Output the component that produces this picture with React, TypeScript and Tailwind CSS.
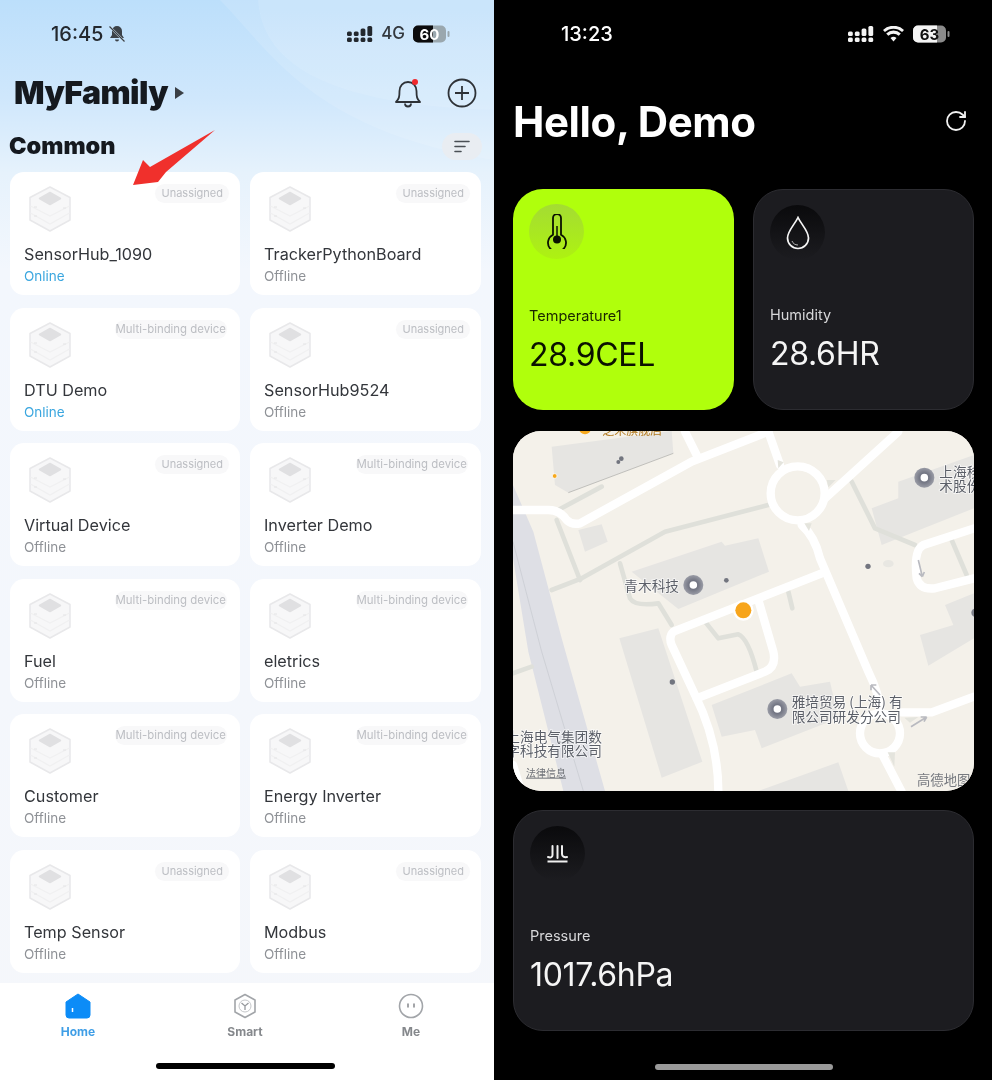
import React from "react";
import { RotateCw } from "lucide-react";

const devices = [
  ["SensorHub_1090", "Unassigned", true], ["TrackerPythonBoard", "Unassigned", false],
  ["DTU Demo", "Multi-binding device", true], ["SensorHub9524", "Unassigned", false],
  ["Virtual Device", "Unassigned", false], ["Inverter Demo", "Multi-binding device", false],
  ["Fuel", "Multi-binding device", false], ["eletrics", "Multi-binding device", false],
  ["Customer", "Multi-binding device", false], ["Energy Inverter", "Multi-binding device", false],
  ["Temp Sensor", "Unassigned", false], ["Modbus", "Unassigned", false],
] as [string, string, boolean][];

function Signal({ color }: { color: string }) {
  return (
    <svg width="26" height="16" viewBox="0 0 26 16" fill={color}>
      <rect x="0" y="5.500" width="4.800" height="4.500" rx="1.500" />
      <rect x="6.800" y="5.500" width="4.800" height="4.500" rx="1.500" />
      <rect x="13.600" y="2.500" width="4.800" height="7.500" rx="1.500" />
      <rect x="20.400" y="0" width="4.800" height="10" rx="1.500" />
      <rect x="0" y="11.500" width="4.800" height="4.500" rx="1.500" />
      <rect x="6.800" y="11.500" width="4.800" height="4.500" rx="1.500" />
      <rect x="13.600" y="11.500" width="4.800" height="4.500" rx="1.500" />
      <rect x="20.400" y="11.500" width="4.800" height="4.500" rx="1.500" />
    </svg>
  );
}

function Battery({ value, dark }: { value: string; dark: boolean }) {
  const fill = dark ? "#f4f4f4" : "#0b0b0d";
  const track = dark ? "#8b8b8b" : "#9aa7ae";
  const text = dark ? "#111" : "#fff";
  return (
    <svg width="37" height="18" viewBox="0 0 37 18">
      <rect x="0" y="0.500" width="33" height="17" rx="5" fill={track} />
      <path d={dark ? "M5 .5h19v17H5a5 5 0 0 1-5-5v-7a5 5 0 0 1 5-5z" : "M5 .5h15v17H5a5 5 0 0 1-5-5v-7a5 5 0 0 1 5-5z"} fill={fill} />
      <rect x="34.500" y="6" width="2" height="6" rx="1" fill={track} />
      <text x="16.500" y="14.500" textAnchor="middle" fontSize="15" fontWeight="700" fontFamily="Inter, sans-serif" fill={text}>{value}</text>
    </svg>
  );
}

function Cube() {
  return (
    <svg width="42" height="46" viewBox="0 0 42 46">
      <path d="M21 1 41 11.500V34L21 45 1 34V11.500Z" fill="#f7f7f8" stroke="#e8e8ea" strokeWidth="1.500" strokeLinejoin="round" />
      <path d="M21 6.500 31.500 12.500 21 18.500 10.500 12.500Z" fill="#e0e0e2" stroke="#e0e0e2" strokeWidth="1.500" strokeLinejoin="round" />
      <path d="M1.500 20 21 30l19.500-10M1.500 27 21 38l19.500-11" fill="none" stroke="#f0f0f1" strokeWidth="1.200" />
      <path d="M5 21h3M34 22h3M5 30h3" stroke="#e4e4e6" strokeWidth="1" />
    </svg>
  );
}

function DeviceCard({ name, tag, online }: { name: string; tag: string; online: boolean }) {
  const multi = tag !== "Unassigned";
  return (
    <div className="h-[123px] rounded-[14px] bg-white pl-[14px] font-['Inter',sans-serif]">
      <div className="flex h-[60px] items-start justify-between">
        <div className="ml-[5px] mt-[14px]"><Cube /></div>
        <div className={`mt-[12px] flex h-[19px] items-center rounded-full bg-[#f8f8f9] text-[#bcbec3] ${multi ? "mr-[13px] px-[1px] text-[11.400px]" : "mr-[11px] px-[6px] text-[11px]"}`}>{tag}</div>
      </div>
      <div className="mt-[11px] text-[16.200px] leading-[22px] text-[#33363b]">{name}</div>
      <div className="text-[13.500px] leading-[22px]">
        <span className={online ? "text-[#3aa6df]" : "text-[#8e9196]"}>{online ? "Online" : "Offline"}</span>
      </div>
    </div>
  );
}

function LeftPanel() {
  return (
    <div className="relative flex h-[1080px] w-[494px] shrink-0 flex-col overflow-hidden bg-[linear-gradient(180deg,#bcdffb_0%,#cfe7fc_9%,#e6f2fc_16%,#f3f7fd_25%,#f5f7fb_100%)] font-['Inter',sans-serif] blur-[0.5px]">
      <svg className="absolute left-0 top-0" width="494" height="300" viewBox="0 0 494 300">
        <path d="M220 0C270 50 310 130 494 160V0Z" fill="#ffffff" opacity="0.12" />
        <path d="M258 0C262 60 320 105 494 110V0Z" fill="#ffffff" opacity="0.1" />
      </svg>
      <div className="relative flex h-[66px] items-center pl-[51px] pr-[44px] pt-[2px]">
        <span className="text-[20px] font-medium text-[#23282e]">16:45</span>
        <svg className="ml-[5px]" width="18" height="18" viewBox="0 0 18 18">
          <path d="M9 1a5 5 0 0 1 5 5v4l2 3H2l2-3V6a5 5 0 0 1 5-5zM7 14.500h4a2 2 0 0 1-4 0z" fill="#3c4248" />
          <path d="M2 2l14 14" stroke="#d9ebfb" strokeWidth="2" /><path d="M1.500 1.500l15 15" stroke="#3c4248" strokeWidth="1.200" />
        </svg>
        <div className="ml-auto flex items-center gap-[8px]">
          <Signal color="#23282e" />
          <span className="text-[17px] font-medium text-[#33383e]">4G</span>
          <Battery value="60" dark={false} />
        </div>
      </div>
      <div className="relative flex h-[54px] items-center pl-[14px] pr-[17px]">
        <span className="text-[32px] font-black tracking-[-0.6px] text-[#15191f]">MyFamily</span>
        <svg className="ml-[7px]" width="9" height="12" viewBox="0 0 9 12"><path d="M0 0 9 6 0 12Z" fill="#3a3f45" /></svg>
        <svg className="ml-auto" width="28" height="30" viewBox="0 0 28 30">
          <path d="M2 24c3-3 3.500-5 3.500-11 0-5 3.500-9 8.500-9s8.500 4 8.500 9c0 6 .5 8 3.500 11Z" fill="none" stroke="#2e3237" strokeWidth="1.800" strokeLinejoin="round" />
          <path d="M11 25.500a3 3 0 0 0 6 0" fill="none" stroke="#2e3237" strokeWidth="1.800" />
          <circle cx="21" cy="4" r="3" fill="#f0282c" />
        </svg>
        <svg className="ml-[25px]" width="30" height="30" viewBox="0 0 30 30">
          <circle cx="15" cy="15" r="13.500" fill="none" stroke="#2e3237" strokeWidth="1.800" />
          <path d="M15 8v14M8 15h14" stroke="#2e3237" strokeWidth="1.800" />
        </svg>
      </div>
      <div className="relative flex h-[52px] items-center pl-[9px] pr-[12px]">
        <span className="text-[23.500px] font-black text-[#15191f]">Common</span>
        <div className="ml-auto flex h-[27px] w-[40px] items-center justify-center rounded-full bg-[#e9edf2]">
          <svg width="16" height="13" viewBox="0 0 16 13"><path d="M1 1.500h14M1 6.500h10M1 11.500h6" stroke="#4a4f55" strokeWidth="1.600" strokeLinecap="round" /></svg>
        </div>
      </div>
      <div className="relative grid grid-cols-[230px_231px] gap-x-[10px] gap-y-[12.600px] pl-[10px]">
        {devices.map(([n, t, o]) => <DeviceCard key={n} name={n} tag={t} online={o} />)}
      </div>
      <div className="relative mt-[10px] flex flex-1 flex-col bg-white">
        <div className="grid grid-cols-[156px_178px_154px] pt-[10px] text-center text-[12px] font-bold leading-[16px]">
          <div className="flex flex-col items-center text-[#3f9ee6]">
            <svg width="26" height="26" viewBox="0 0 26 26"><path d="M13 1 25 9v13a3 3 0 0 1-3 3H4a3 3 0 0 1-3-3V9Z" fill="#0c8cf7" strokeLinejoin="round" stroke="#0c8cf7" /><path d="M7.500 15v4" stroke="#fff" strokeWidth="1.500" /></svg>
            <span className="mt-[5px]">Home</span>
          </div>
          <div className="flex flex-col items-center text-[#85888c]">
            <svg width="26" height="26" viewBox="0 0 26 26"><path d="M13 1.500 23 7v12l-10 5.500L3 19V7Z" fill="none" stroke="#a2a5a9" strokeWidth="1.600" strokeLinejoin="round" /><circle cx="13" cy="13" r="6" fill="none" stroke="#c5c7ca" strokeWidth="1" /><path d="M9.500 10 13 13l3.500-3M13 13v4" fill="none" stroke="#96999d" strokeWidth="1.300" /></svg>
            <span className="mt-[5px]">Smart</span>
          </div>
          <div className="flex flex-col items-center text-[#85888c]">
            <svg width="26" height="26" viewBox="0 0 26 26"><circle cx="13" cy="13" r="11.500" fill="none" stroke="#a2a5a9" strokeWidth="1.600" /><path d="M10 11v3M16 11v3" stroke="#85888c" strokeWidth="1.500" strokeLinecap="round" /></svg>
            <span className="mt-[5px]">Me</span>
          </div>
        </div>
        <div className="ml-[156px] mt-[23px] h-[6px] w-[179px] rounded-full bg-black" />
      </div>
      <svg className="absolute left-[130px] top-[128px]" width="90" height="60" viewBox="0 0 90 60">
        <path d="M3 57 13 32 20 39 85 2 36 44 28 54Z" fill="#f0302c" />
      </svg>
    </div>
  );
}

function Poi({ x, y, r = 30 }: { x: number; y: number; r?: number }) {
  return (
    <g>
      <circle cx={x} cy={y} r={r} fill="url(#poi)" />
      <circle cx={x} cy={y} r={r * 0.38} fill="#fff" />
    </g>
  );
}

function MapLabel({ x, y, children }: { x: number; y: number; children: React.ReactNode }) {
  return (
    <text x={x} y={y} fontSize="41" fill="#5b5f68" stroke="#ffffff" strokeWidth="5" paintOrder="stroke" strokeOpacity="0.7" fontFamily="'Noto Sans CJK SC', sans-serif">{children}</text>
  );
}

function MapView() {
  const road = { fill: "none", stroke: "#ffffff", strokeWidth: 25, strokeLinejoin: "round" as const, strokeLinecap: "round" as const };
  const path = { fill: "none", stroke: "#dfe0da", strokeWidth: 14, strokeLinejoin: "round" as const, strokeLinecap: "round" as const };
  return (
    <div className="mt-[21px] h-[360px] overflow-hidden rounded-[28px] bg-[#f4f1ea]">
      <svg width="461" height="360" viewBox="24 18 1383 1080" className="block">
        <defs>
          <radialGradient id="poi"><stop offset="0.4" stopColor="#6f7280" /><stop offset="1" stopColor="#9a9ca6" /></radialGradient>
        </defs>
        <rect x="24" y="18" width="1383" height="1080" fill="#f4f1ea" />
        <polygon points="24,180 85,320 170,640 300,1098 175,1098 70,680 24,400" fill="#dedfe5" />
        <path d="M24 350 110 680 235 1098" stroke="#c6c8cf" strokeWidth="2" fill="none" />
        <g fill="#e6e5e2">
          <polygon points="140,65 500,18 505,85 190,203 150,180" />
          <polygon points="220,315 290,298 308,350 240,380" />
          <polygon points="380,440 650,350 660,362 760,340 792,440 520,552" />
          <polygon points="343,640 460,610 592,1010 470,1058" />
          <polygon points="620,840 860,745 885,785 975,770 1000,880 770,970 750,915 650,935" />
          <polygon points="760,1098 1000,1012 1030,1098" />
          <polygon points="1100,250 1180,220 1180,170 1407,90 1407,250 1130,360" />
          <polygon points="1320,540 1407,505 1407,640 1270,722 1245,630 1345,600" />
        </g>
        <path d="M190 203 505 85" stroke="#a9a9a6" strokeWidth="2" />
        <g {...path}>
          <path d="M165 252 290 185" />
          <path d="M155 285 225 465" />
          <path d="M140 495 230 460 480 320 790 240" />
          <path d="M345 415 375 520Q390 545 460 535L500 600" />
          <path d="M600 590 640 640 700 628Q730 640 755 740" />
          <path d="M850 500 862 550" />
          <path d="M1040 170 1110 310 1230 360" />
          <path d="M1340 345 1385 450" />
          <path d="M24 745 80 725" />
        </g>
        <g {...road}>
          <path d="M24 255H130Q165 255 185 285 200 300 225 295L560 110 790 20" />
          <path d="M540 20 580 100" />
          <circle cx="878" cy="205" r="81" />
          <path d="M790 20 825 120" />
          <path d="M1180 20 960 220" />
          <path d="M890 300Q930 335 945 400L1090 740Q1125 810 1125 860" />
          <path d="M950 445 505 620Q490 635 500 660L570 810Q640 950 640 1100" />
          <path d="M760 525 805 680Q815 725 780 740L575 820" />
          <circle cx="1125" cy="925" r="60" />
          <path d="M1190 862H1280L1407 815" />
          <path d="M1130 985 1190 1100" />
          <path d="M1407 310 1255 360Q1225 375 1235 460 1245 495 1290 490L1407 460" />
          <path d="M24 1020 48 1098" />
        </g>
        <g fill="#e4e4dd"><polygon points="818,105 836,112 820,130" /><polygon points="965,165 992,165 970,187" /><polygon points="898,295 920,295 912,318" /><polygon points="1198,878 1240,876 1215,893" /><polygon points="1148,982 1170,982 1168,1025 " /></g>
        <path d="M1125 810 1098 780M1098 780v16M1098 780h16M1218 905 1265 876M1265 876h-18M1265 876l-8 14M1240 405 1252 455M1252 455l-10-10M1252 455l6-14" stroke="#b9bac0" strokeWidth="5" fill="none" />
        <circle cx="149" cy="153" r="7" fill="#f6a81c" stroke="#fff" strokeWidth="2" />
        <circle cx="240" cy="10" r="18" fill="#f6a81c" />
        <text x="292" y="30" fontSize="36" fill="#b27a20" fontFamily="'Noto Sans CJK SC', sans-serif">芝禾旗舰店</text>
        <g fill="#72757f"><circle cx="349" cy="101" r="7" /><circle cx="340" cy="111" r="6" /><circle cx="664" cy="466" r="7" /><circle cx="1089" cy="424" r="8" /><circle cx="502" cy="771" r="8" /></g>
        <ellipse cx="1150" cy="416" rx="16" ry="11" fill="#e8e7e2" />
        <circle cx="715" cy="556" r="31" fill="#ffffff" />
        <circle cx="715" cy="556" r="24" fill="#f7a51c" />
        <Poi x={565} y={480} />
        <Poi x={1258} y={158} />
        <Poi x={817} y={852} />
        <circle cx="1412" cy="563" r="13" fill="#7f828c" />
        <MapLabel x={358} y={497}>青木科技</MapLabel>
        <MapLabel x={1303} y={155}>上海移</MapLabel>
        <MapLabel x={1303} y={199}>术股份</MapLabel>
        <MapLabel x={860} y={846}>雅培贸易 (上海) 有</MapLabel>
        <MapLabel x={860} y={891}>限公司研发分公司</MapLabel>
        <MapLabel x={4} y={952}>上海电气集团数</MapLabel>
        <MapLabel x={4} y={994}>字科技有限公司</MapLabel>
        <text x="63" y="1055" fontSize="30" fill="#6f7278" textDecoration="underline" fontFamily="'Noto Sans CJK SC', sans-serif">法律信息</text>
        <text x="1236" y="1080" fontSize="40" fill="#777a80" fontFamily="'Noto Sans CJK SC', sans-serif">高德地图</text>
      </svg>
    </div>
  );
}

function IconCircle({ children, light }: { children: React.ReactNode; light?: boolean }) {
  return (
    <div className={`flex h-[55px] w-[55px] items-center justify-center rounded-full ${light ? "bg-[linear-gradient(180deg,#a4dc33,#aef211)]" : "bg-[linear-gradient(180deg,#0a0a0c,#1c1c20)]"}`}>
      {children}
    </div>
  );
}

function Metric({ label, value, icon, green, labelOffset }: { label: string; value: string; icon: React.ReactNode; green?: boolean; labelOffset: string }) {
  return (
    <div className={`h-[221px] rounded-[30px] pt-[15px] ${green ? "bg-[#b0ff0c] pl-[16px] text-[#0b1200]" : "border border-[#2c2c31] bg-[#1c1c20] pl-[16px] text-[#f5f5f5]"}`}>
      <IconCircle light={green}>{icon}</IconCircle>
      <div className={`${labelOffset} text-[14.500px] leading-[20px] ${green ? "text-[#1a2600]" : "text-[#d8d8da]"}`}>{label}</div>
      <div className="mt-[11px] text-[32px] leading-[36px] tracking-[-0.3px]">{value}</div>
    </div>
  );
}

function RightPanel() {
  return (
    <div className="flex h-[1080px] flex-1 flex-col overflow-hidden bg-black pl-[19px] pr-[18px] font-['Inter',sans-serif] text-white blur-[0.3px]">
      <div className="flex h-[66px] items-center pl-[48px] pr-[24px] pt-[2px]">
        <span className="text-[20px] font-medium">13:23</span>
        <div className="ml-auto flex items-center gap-[9px]">
          <Signal color="#f4f4f4" />
          <svg width="21" height="16" viewBox="0 0 21 16"><path d="M10.500 15.500 7.500 12a4.500 4.500 0 0 1 6 0ZM5.300 9.800 3.200 7.500a10.500 10.500 0 0 1 14.600 0l-2.100 2.300a7.500 7.500 0 0 0-10.400 0ZM1.900 6.100 0 4a15.200 15.200 0 0 1 21 0l-1.900 2.100a12.500 12.500 0 0 0-17.200 0Z" fill="#f4f4f4" /></svg>
          <Battery value="63" dark />
        </div>
      </div>
      <div className="mb-[13px] flex h-[110px] items-center justify-between pr-[6px]">
        <span className="text-[42px] font-bold tracking-[-0.4px]">Hello, Demo</span>
        <RotateCw size={24} strokeWidth={1.800} color="#f2f2f2" />
      </div>
      <div className="grid grid-cols-2 gap-x-[19px]">
        <Metric green label="Temperature1" value="28.9CEL" labelOffset="mt-[47px]" icon={
          <svg width="20" height="35" viewBox="0 0 20 35">
            <path d="M6 4a4 4 0 0 1 8 0v16.700a9 9 0 1 1-8 0Z" fill="none" stroke="#0b1200" strokeWidth="1.800" />
            <path d="M10 12v13" stroke="#0b1200" strokeWidth="1.500" />
            <circle cx="10" cy="25.500" r="4" fill="#0b1200" />
          </svg>
        } />
        <Metric label="Humidity" value="28.6HR" labelOffset="mt-[45px]" icon={
          <svg width="24" height="34" viewBox="0 0 24 34">
            <path d="M12 1.500C9 8 1.500 15 1.500 22a10.500 10.500 0 0 0 21 0C22.500 15 15 8 12 1.500Z" fill="none" stroke="#f5f5f5" strokeWidth="1.700" />
            <path d="M6 25c1 2.500 3 4 6 4" fill="none" stroke="#b5b5b5" strokeWidth="1" />
          </svg>
        } />
      </div>
      <MapView />
      <div className="mt-[19px]">
        <Metric label="Pressure" value="1017.6hPa" labelOffset="mt-[45px]" icon={
          <svg width="21" height="18" viewBox="0 0 21 18">
            <path d="M1 12c3 1 4.500 0 4.500-2V1M10.500 1v12M15 1v8c0 2.500 2 3.500 5 3" fill="none" stroke="#f0f0f0" strokeWidth="2" strokeLinecap="round" />
            <path d="M0.500 16.500h20" stroke="#f0f0f0" strokeWidth="2" />
          </svg>
        } />
      </div>
      <div className="mx-auto mt-[33px] h-[6px] w-[178px] rounded-full bg-[#9a9a9a]" />
    </div>
  );
}

export default function App() {
  return (
    <div className="flex h-[1080px] w-[992px] overflow-hidden">
      <LeftPanel />
      <RightPanel />
    </div>
  );
}
